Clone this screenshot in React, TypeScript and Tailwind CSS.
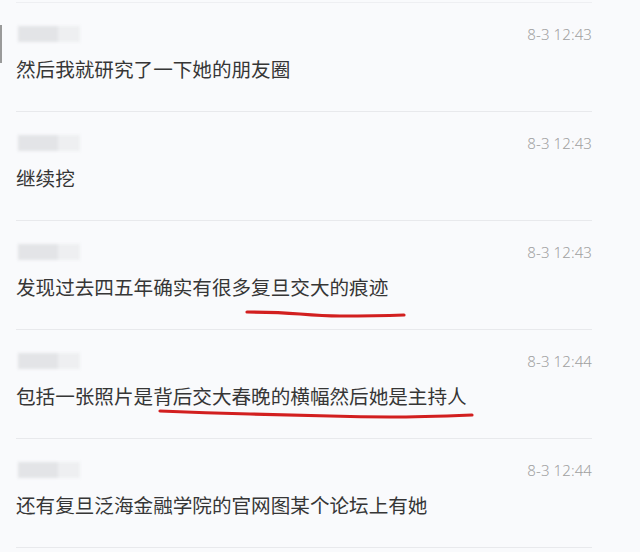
const comments = [
  { time: '8-3 12:43', text: '然后我就研究了一下她的朋友圈' },
  { time: '8-3 12:43', text: '继续挖' },
  { time: '8-3 12:43', text: '发现过去四五年确实有很多复旦交大的痕迹', mark: 'M231 91 Q 260 91 284 93 T 324 95 Q 360 95 388 94' },
  { time: '8-3 12:44', text: '包括一张照片是背后交大春晚的横幅然后她是主持人', mark: 'M144 81 Q 190 83 234 84 T 314 86 Q 345 87 374 87 T 456 85' },
  { time: '8-3 12:44', text: '还有复旦泛海金融学院的官网图某个论坛上有她' },
];

export default function App() {
  return (
    <div className="relative h-[552px] w-[640px] overflow-hidden bg-[#f9fafc] pt-[2px] pl-[16px] pr-[48px] font-['Noto_Sans','Noto_Sans_CJK_SC',sans-serif]">
      {/* screenshot edge artifact */}
      <div className="absolute left-0 top-[25px] h-[38px] w-[2px] bg-[#9a9a9a]" />

      <div className="border-t border-[#eeeff2]">
        {comments.map((c, idx) => (
          <div key={idx} className="relative h-[109px] border-b border-[#e8e9ec] pt-[18px]">
            <div className="flex h-[26px] items-center justify-between">
              <div className="ml-[2px] flex h-[18px] items-center blur-[1.5px]">
                <div className="h-[16px] w-[40px] bg-[#e3e4e7]" />
                <div className="h-[16px] w-[22px] bg-[#eeeff1]" />
              </div>
              <span className="text-[15px] font-light tracking-[0.1px] text-[#a0a0a0]">{c.time}</span>
            </div>
            <p className="mt-[9px] text-[19.6px] leading-[26px] text-[#363636] font-['Noto_Sans_CJK_SC',sans-serif]">
              {c.text}
            </p>
            {c.mark && (
              <svg className="pointer-events-none absolute left-0 top-0" width="576" height="109">
                <path d={c.mark} fill="none" stroke="#d21f1f" strokeWidth="3.2" strokeLinecap="round" />
              </svg>
            )}
          </div>
        ))}
      </div>
    </div>
  );
}
